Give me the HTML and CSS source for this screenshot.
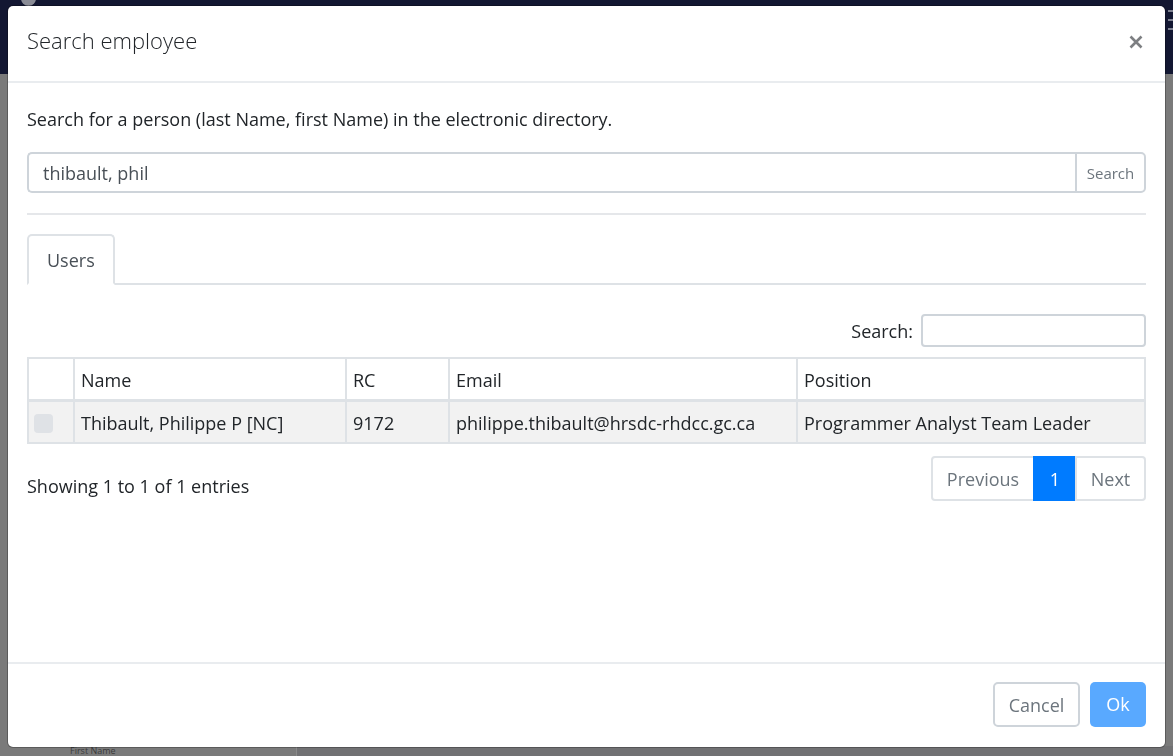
FILE: index.html
```html
<!DOCTYPE html>
<html lang="en">
<head>
<meta charset="utf-8">
<title>Search employee</title>
<link rel="stylesheet" href="styles.css">
</head>
<body>
<div class="page">
  <header class="topnav">
    <span class="avatar"></span>
    <span class="menu-icon"><i></i><i></i><i></i></span>
  </header>
  <main class="page-main"></main>
  <div class="page-bottom">
    <div class="pb-left"><span class="pb-label">First Name</span></div>
    <div class="pb-right"></div>
  </div>
</div>

<div class="modal" role="dialog" aria-labelledby="modalTitle">
  <div class="modal-header">
    <h5 class="modal-title" id="modalTitle">Search employee</h5>
    <button class="close" type="button" aria-label="Close">
      <svg width="14" height="14" viewBox="0 0 14 14"><path d="M1.5 1.5L12.5 12.5M12.5 1.5L1.5 12.5" stroke="#7d7f82" stroke-width="2.6" stroke-linecap="butt"/></svg>
    </button>
  </div>
  <div class="modal-body">
    <p class="lead-text">Search for a person (last Name, first Name) in the electronic directory.</p>
    <div class="input-group">
      <input class="form-control" type="text" value="thibault, phil">
      <button class="btn-search" type="button">Search</button>
    </div>
    <hr class="divider">
    <ul class="nav-tabs">
      <li class="tab active">Users</li>
    </ul>
    <div class="filter">
      <label class="filter-label">Search:</label>
      <input class="filter-input" type="search">
    </div>
    <div class="dtable" role="table">
      <div class="dt-row dt-head" role="row">
        <div class="cell" role="columnheader"></div>
        <div class="cell" role="columnheader">Name</div>
        <div class="cell" role="columnheader">RC</div>
        <div class="cell" role="columnheader">Email</div>
        <div class="cell" role="columnheader">Position</div>
      </div>
      <div class="dt-row dt-body" role="row">
        <div class="cell" role="cell"><span class="checkbox"></span></div>
        <div class="cell" role="cell">Thibault, Philippe P [NC]</div>
        <div class="cell" role="cell">9172</div>
        <div class="cell" role="cell">philippe.thibault@hrsdc-rhdcc.gc.ca</div>
        <div class="cell" role="cell">Programmer Analyst Team Leader</div>
      </div>
    </div>
    <div class="dt-footer">
      <div class="dt-info">Showing 1 to 1 of 1 entries</div>
      <ul class="pagination">
        <li class="page-item prev">Previous</li>
        <li class="page-item current">1</li>
        <li class="page-item next">Next</li>
      </ul>
    </div>
  </div>
  <div class="modal-footer">
    <button class="btn btn-cancel" type="button">Cancel</button>
    <button class="btn btn-ok" type="button">Ok</button>
  </div>
</div>
</body>
</html>
```

FILE: styles.css
```css
* {
  box-sizing: border-box;
}

html, body {
  margin: 0;
  padding: 0;
  height: 756px;
  overflow: hidden;
}

body {
  font-family: "Open Sans", "Noto Sans", sans-serif;
  color: #212529;
  background: #7a7a7a;
}

.page {
  height: 756px;
  display: flex;
  flex-direction: column;
}

.topnav {
  height: 74px;
  background: #131732;
  position: relative;
}

.avatar {
  position: absolute;
  left: 21px;
  top: -9px;
  width: 15px;
  height: 15px;
  border-radius: 50%;
  background: #8a8c96;
}

.menu-icon {
  position: absolute;
  left: 1168px;
  top: 10px;
  display: flex;
  flex-direction: column;
  gap: 7px;
}

.menu-icon i {
  display: block;
  width: 10px;
  height: 2px;
  background: #7d8090;
}

.page-main {
  flex: 1;
}

.page-bottom {
  height: 10px;
  display: flex;
}

.pb-left {
  width: 296px;
  padding-left: 70px;
}

.pb-label {
  display: block;
  font-size: 9px;
  line-height: 10px;
  color: #3a3a3a;
}

.pb-right {
  flex: 1;
  background: #717173;
  border-left: 1px solid #8a8a8a;
}

/* Modal */
.modal {
  position: fixed;
  left: 8px;
  top: 6px;
  width: 1157px;
  height: 741px;
  background: #fff;
  border-radius: 5px;
  box-shadow: 0 0 0 1px rgba(0, 0, 0, 0.25);
  display: flex;
  flex-direction: column;
}

.modal-header {
  height: 77px;
  padding: 0 22px 0 19px;
  display: flex;
  align-items: center;
  justify-content: space-between;
  border-bottom: 2px solid #e9ecef;
}

.modal-title {
  margin: 0 0 8px;
  font-size: 22px;
  font-weight: 300;
  line-height: 30px;
  color: #212529;
}

.close {
  border: 0;
  background: transparent;
  padding: 0;
  width: 14px;
  height: 14px;
  display: flex;
  margin-top: -3px;
}

.modal-body {
  flex: 1;
  padding: 24px 19px 0;
}

.lead-text {
  margin: 0 0 21px;
  font-size: 18px;
  line-height: 24px;
}

.input-group {
  display: flex;
  height: 41px;
}

.form-control {
  flex: 1;
  min-width: 0;
  height: 41px;
  border: 2px solid #ced4da;
  border-right: 0;
  border-radius: 5px 0 0 5px;
  padding: 0 14px;
  font-family: inherit;
  font-size: 18px;
  color: #495057;
  outline: none;
}

.btn-search {
  width: 71px;
  height: 41px;
  border: 2px solid #ced4da;
  border-radius: 0 5px 5px 0;
  background: #fff;
  font-family: inherit;
  font-size: 15px;
  color: #6c757d;
  padding: 0;
}

.divider {
  margin: 20px 0 19px;
  border: 0;
  border-top: 2px solid #e5e7ea;
  height: 0;
}

.nav-tabs {
  list-style: none;
  margin: 0;
  padding: 0;
  display: flex;
  border-bottom: 2px solid #dee2e6;
}

.tab {
  height: 51px;
  margin-bottom: -2px;
  padding: 0 18px;
  border: 2px solid #dee2e6;
  border-bottom-color: #fff;
  border-radius: 5px 5px 0 0;
  background: #fff;
  font-size: 18px;
  line-height: 48px;
  color: #495057;
}

.filter {
  margin-top: 29px;
  display: flex;
  justify-content: flex-end;
  align-items: center;
  gap: 8px;
}

.filter-label {
  font-size: 18px;
  line-height: 26px;
}

.filter-input {
  width: 225px;
  height: 33px;
  border: 2px solid #ced4da;
  border-radius: 4px;
  outline: none;
  font-family: inherit;
}

.dtable {
  margin-top: 10px;
  border-top: 2px solid #dee2e6;
}

.dt-row {
  display: grid;
  grid-template-columns: 46px 272px 103px 348px 350px;
}

.cell {
  height: 42px;
  padding: 0 6px;
  border-left: 2px solid #dee2e6;
  border-bottom: 2px solid #dee2e6;
  font-size: 18px;
  line-height: 42px;
  white-space: nowrap;
  overflow: hidden;
}

.cell:last-child {
  border-right: 2px solid #dee2e6;
}

.dt-head .cell {
  height: 43px;
  border-bottom-width: 3px;
}

.dt-body .cell {
  background: #f2f2f2;
}

.checkbox {
  display: inline-block;
  width: 19px;
  height: 19px;
  border-radius: 4px;
  background: #dfe2e6;
  vertical-align: middle;
  margin-left: -1px;
  margin-top: -4px;
}

.dt-footer {
  margin-top: 12px;
  display: flex;
  justify-content: space-between;
  align-items: flex-start;
}

.dt-info {
  font-size: 18px;
  line-height: 24px;
  padding-top: 18px;
}

.pagination {
  list-style: none;
  margin: 0;
  padding: 0;
  display: flex;
}

.page-item {
  height: 45px;
  border: 2px solid #dee2e6;
  margin-left: -2px;
  font-size: 18px;
  line-height: 43px;
  color: #6c757d;
  text-align: center;
}

.page-item.prev {
  width: 104px;
  margin-left: 0;
  border-radius: 4px 0 0 4px;
}

.page-item.current {
  width: 44px;
  background: #007bff;
  border-color: #007bff;
  color: #fff;
}

.page-item.next {
  width: 71px;
  border-radius: 0 4px 4px 0;
}

.modal-footer {
  height: 85px;
  border-top: 2px solid #e9ecef;
  padding: 18px 19px 0;
  display: flex;
  justify-content: flex-end;
  align-items: flex-start;
  gap: 10px;
}

.btn {
  height: 45px;
  border-radius: 5px;
  font-family: inherit;
  font-size: 18px;
  line-height: 43px;
  padding: 0;
}

.btn-cancel {
  width: 87px;
  border: 2px solid #ced4da;
  background: #fff;
  color: #6c757d;
}

.btn-ok {
  width: 56px;
  border: 0;
  background: #59a9ff;
  color: #fff;
}
```
